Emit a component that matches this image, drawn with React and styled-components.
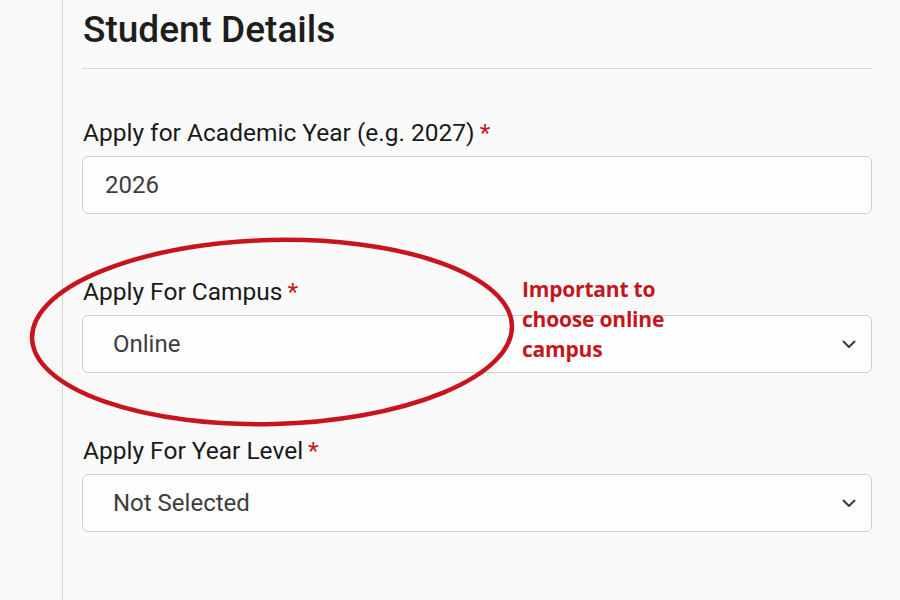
import React from "react";
import styled, { createGlobalStyle } from "styled-components";

const Global = createGlobalStyle`
  html, body { margin: 0; padding: 0; background: #fafafa; }
  body { font-family: Roboto, "Liberation Sans", sans-serif; color: #222; }
`;

const Page = styled.div`
  display: flex;
  width: 900px;
  height: 600px;
  overflow: hidden;
  position: relative;
  background: #fafafa;
`;

const Sidebar = styled.div`
  width: 62px;
  flex: none;
  border-right: 1.5px solid #d4d4d4;
  background: #f8f8f8;
`;

const Main = styled.div`
  flex: 1;
  padding: 0 28px 0 19px;
  display: flex;
  flex-direction: column;
`;

const Heading = styled.h1`
  margin: 0;
  padding: 10px 0 18px 1px;
  font-size: 37px;
  font-weight: 500;
  color: #1e1e1e;
  line-height: 40px;
  border-bottom: 1.5px solid #d6d6d6;
`;

const Field = styled.div`
  display: flex;
  flex-direction: column;
  margin-top: ${(p) => p.$top}px;
`;

const Label = styled.label`
  font-size: 24.5px;
  line-height: 28px;
  color: #1a1a1a;
  padding-left: 1px;
  margin-bottom: 9px;
`;

const Star = styled.span`
  color: #c4161c;
  margin-left: 5px;
`;

const Box = styled.div`
  height: 56px;
  border: 1.5px solid #cfcfcf;
  border-radius: 6px;
  background: #fdfdfd;
  display: flex;
  align-items: center;
  justify-content: space-between;
  padding: 0 14px 0 ${(p) => p.$pad}px;
  font-size: 24px;
  color: #3d3d3d;
`;

const Annotation = styled.div`
  position: absolute;
  left: 522px;
  top: 274px;
  font-family: "Open Sans", "Noto Sans", sans-serif;
  font-weight: 700;
  font-size: 21px;
  line-height: 30px;
  color: #c4161c;
  letter-spacing: -0.2px;
`;

const Ring = styled.svg`
  position: absolute;
  left: 0;
  top: 0;
  pointer-events: none;
`;

const Chevron = () => (
  <svg width="16" height="16" viewBox="0 0 16 16" fill="none">
    <path d="M2.5 5.5 L8 11 L13.5 5.5" stroke="#3a3a3a" strokeWidth="2" strokeLinecap="round" strokeLinejoin="round" />
  </svg>
);

export default function App() {
  return (
    <Page>
      <Global />
      <Sidebar />
      <Main>
        <Heading>Student Details</Heading>
        <Field $top={50}>
          <Label>Apply for Academic Year (e.g. 2027)<Star>*</Star></Label>
          <Box $pad={22}>2026</Box>
        </Field>
        <Field $top={64}>
          <Label>Apply For Campus<Star>*</Star></Label>
          <Box $pad={30}>
            Online
            <Chevron />
          </Box>
        </Field>
        <Field $top={64}>
          <Label>Apply For Year Level<Star>*</Star></Label>
          <Box $pad={30}>
            Not Selected
            <Chevron />
          </Box>
        </Field>
      </Main>
      <Annotation>
        Important to
        <br />
        choose online
        <br />
        campus
      </Annotation>
      <Ring width="900" height="600" viewBox="0 0 900 600">
        <ellipse cx="272" cy="332" rx="240" ry="92" fill="none" stroke="#c8141c" strokeWidth="4.5" transform="rotate(-1.5 272 332)" />
      </Ring>
    </Page>
  );
}
